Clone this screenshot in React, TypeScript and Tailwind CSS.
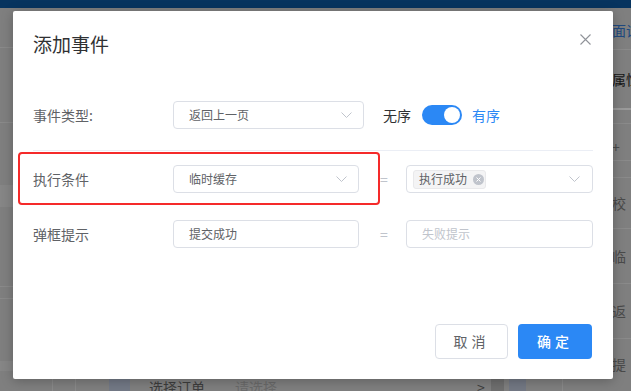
import React from 'react';

function Chevron({ className = '' }: { className?: string }) {
  return (
    <svg width="11" height="6" viewBox="0 0 11 6" fill="none" className={className}>
      <path d="M0.5 0.5L5.5 5.5L10.5 0.5" stroke="#c0c4cc" strokeWidth="1" />
    </svg>
  );
}

function Select({ value, width }: { value: string; width: string }) {
  return (
    <div
      className={`flex h-[28px] items-center justify-between rounded-[4px] border border-[#dcdfe6] pl-[15px] pr-[11px] text-[12px] text-[#606266] ${width}`}
    >
      <span>{value}</span>
      <Chevron />
    </div>
  );
}

function Backdrop() {
  return (
    <div className="flex h-full flex-col">
      <div className="h-[8px] shrink-0 bg-[#07345f]" />
      <div className="flex min-h-0 flex-1">
        {/* left strip of the page behind */}
        <div className="flex w-[13px] shrink-0 flex-col">
          <div className="h-[40px] shrink-0 border-b border-[#8a8a8a]" />
          <div className="h-[75px] shrink-0 border-b border-[#8a8a8a]" />
          <div className="h-[62px] shrink-0" />
          <div className="h-[22px] shrink-0 bg-[#868686]" />
          <div className="h-[80px] shrink-0 border-b border-[#8a8a8a]" />
          <div className="h-[12px] shrink-0 border-b border-[#8a8a8a]" />
          <div className="h-[62px] shrink-0" />
          <div className="h-[10px] shrink-0 bg-[#868686]" />
        </div>

        {/* middle of the page behind, only its bottom row shows */}
        <div className="flex min-w-0 flex-1 flex-col">
          <div className="h-[369px] shrink-0" />
          <div className="flex h-[24px] shrink-0 items-start text-[14px] leading-[20px]">
            <div className="h-full w-[40px] border-r border-[#8a8a8a]" />
            <div className="h-full w-[23px] border-r border-[#8a8a8a]" />
            <div className="h-full w-[33px]" />
            <div className="h-full w-[21px] bg-[#737986]" />
            <span className="ml-[19px] text-[#3d3d3d]">选择订单</span>
            <span className="ml-[30px] text-[#6a6a6a]">请选择</span>
            <span className="ml-[200px] text-[#3d3d3d]">&gt;</span>
            <div className="ml-[6px] h-full w-[13px] bg-[#6f6f6f]" />
            <div className="ml-[5px] h-full w-[17px] bg-[#737884]" />
            <div className="ml-[36px] h-full w-px bg-[#8a8a8a]" />
          </div>
        </div>

        {/* right strip of the page behind */}
        <div className="flex w-[19px] shrink-0 flex-col overflow-hidden text-[14px] leading-[20px] whitespace-nowrap">
          <div className="flex h-[42px] shrink-0 items-center border-b border-[#8a8a8a] pt-[2px] text-[#20497f]">面设</div>
          <div className="flex h-[58px] shrink-0 items-center text-[#161616]">属性</div>
          <div className="h-[2px] shrink-0 bg-[#9a9a9a]" />
          <div className="h-[14px] shrink-0 border-b border-[#8a8a8a]" />
          <div className="flex h-[37px] shrink-0 items-center border-b border-[#8a8a8a] pt-[10px] text-[#4a4a4a]">+</div>
          <div className="h-[17px] shrink-0 border-b border-[#8a8a8a]" />
          <div className="flex h-[51px] shrink-0 items-center border-b border-[#8a8a8a] text-[#4a4a4a]">校</div>
          <div className="flex h-[55px] shrink-0 items-center border-b border-[#8a8a8a] text-[#4a4a4a]">临</div>
          <div className="flex h-[55px] shrink-0 items-center border-b border-[#8a8a8a] text-[#4a4a4a]">返</div>
          <div className="flex h-[50px] shrink-0 items-center text-[#4a4a4a]">提</div>
        </div>
      </div>
    </div>
  );
}

export default function App() {
  return (
    <div
      className="relative h-[391px] w-[631px] overflow-hidden bg-[#7f7f7f]"
      style={{ fontFamily: '"Noto Sans CJK SC", "Noto Sans", sans-serif' }}
    >
      <Backdrop />

      <div className="absolute left-[13px] top-[11px] flex h-[368px] w-[600px] flex-col rounded-[2px] bg-white px-5 shadow-[0_2px_12px_rgba(0,0,0,0.25)]">
        <div className="flex items-start justify-between pt-[21px]">
          <h2 className="text-[19px] leading-[24px] text-[#303133]">添加事件</h2>
          <svg width="11" height="11" viewBox="0 0 11 11" className="mr-[2px] mt-[2px]">
            <path d="M0.5 0.5L10.5 10.5M10.5 0.5L0.5 10.5" stroke="#909399" strokeWidth="1.1" />
          </svg>
        </div>

        <div className="mt-[45px] flex h-[28px] items-center text-[14px]">
          <span className="w-[140px] text-[#606266]">事件类型:</span>
          <Select value="返回上一页" width="w-[191px]" />
          <span className="ml-[19px] text-[#303133]">无序</span>
          <div className="ml-[11px] flex h-[20px] w-[40px] items-center justify-end rounded-full bg-[#2b88f5] pr-[2px]">
            <div className="h-[16px] w-[16px] rounded-full bg-white" />
          </div>
          <span className="ml-[10px] text-[#2b88f5]">有序</span>
        </div>

        <div className="mt-[21px] h-px bg-[#ebeef5]" />

        <div className="mt-[14px] flex h-[28px] items-center text-[14px]">
          <span className="w-[140px] text-[#606266]">执行条件</span>
          <Select value="临时缓存" width="w-[186px]" />
          <span className="w-[47px] pl-[3px] text-center text-[#c0c4cc]">=</span>
          <div className="flex h-[28px] w-[187px] items-center justify-between rounded-[4px] border border-[#dcdfe6] pl-[6px] pr-[12px]">
            <span className="flex h-[19px] items-center gap-[6px] rounded-[3px] border border-[#e9e9eb] bg-[#f4f4f5] pl-[5px] pr-[1px] text-[12px] text-[#606266]">
              执行成功
              <span className="flex h-[11px] w-[11px] items-center justify-center rounded-full bg-[#c0c4cc]">
                <svg width="5" height="5" viewBox="0 0 5 5">
                  <path d="M0.5 0.5L4.5 4.5M4.5 0.5L0.5 4.5" stroke="#ffffff" strokeWidth="1" />
                </svg>
              </span>
            </span>
            <Chevron />
          </div>
        </div>

        <div className="mt-[27px] flex h-[28px] items-center text-[14px]">
          <span className="w-[140px] text-[#606266]">弹框提示</span>
          <div className="flex h-[28px] w-[186px] items-center rounded-[4px] border border-[#dcdfe6] px-[15px] text-[12px] text-[#606266]">
            提交成功
          </div>
          <span className="w-[47px] pl-[3px] text-center text-[#c0c4cc]">=</span>
          <div className="flex h-[28px] w-[187px] items-center rounded-[4px] border border-[#dcdfe6] px-[15px] text-[12px] text-[#c0c4cc]">
            失败提示
          </div>
        </div>

        <div className="flex-1" />

        <div className="flex justify-end gap-[10px] pb-5 pr-px">
          <button className="h-[35px] w-[73px] rounded-[4px] border border-[#dcdfe6] bg-white text-[14px] tracking-[4px] text-[#606266]">
            取消
          </button>
          <button className="h-[35px] w-[74px] rounded-[4px] bg-[#2b88f5] text-[14px] font-medium tracking-[4px] text-white">
            确定
          </button>
        </div>

        {/* annotation frame over the condition row */}
        <div className="pointer-events-none absolute left-[5px] top-[141px] h-[53px] w-[362px] rounded-[4px] border-2 border-[#f52a2a]" />
      </div>
    </div>
  );
}
